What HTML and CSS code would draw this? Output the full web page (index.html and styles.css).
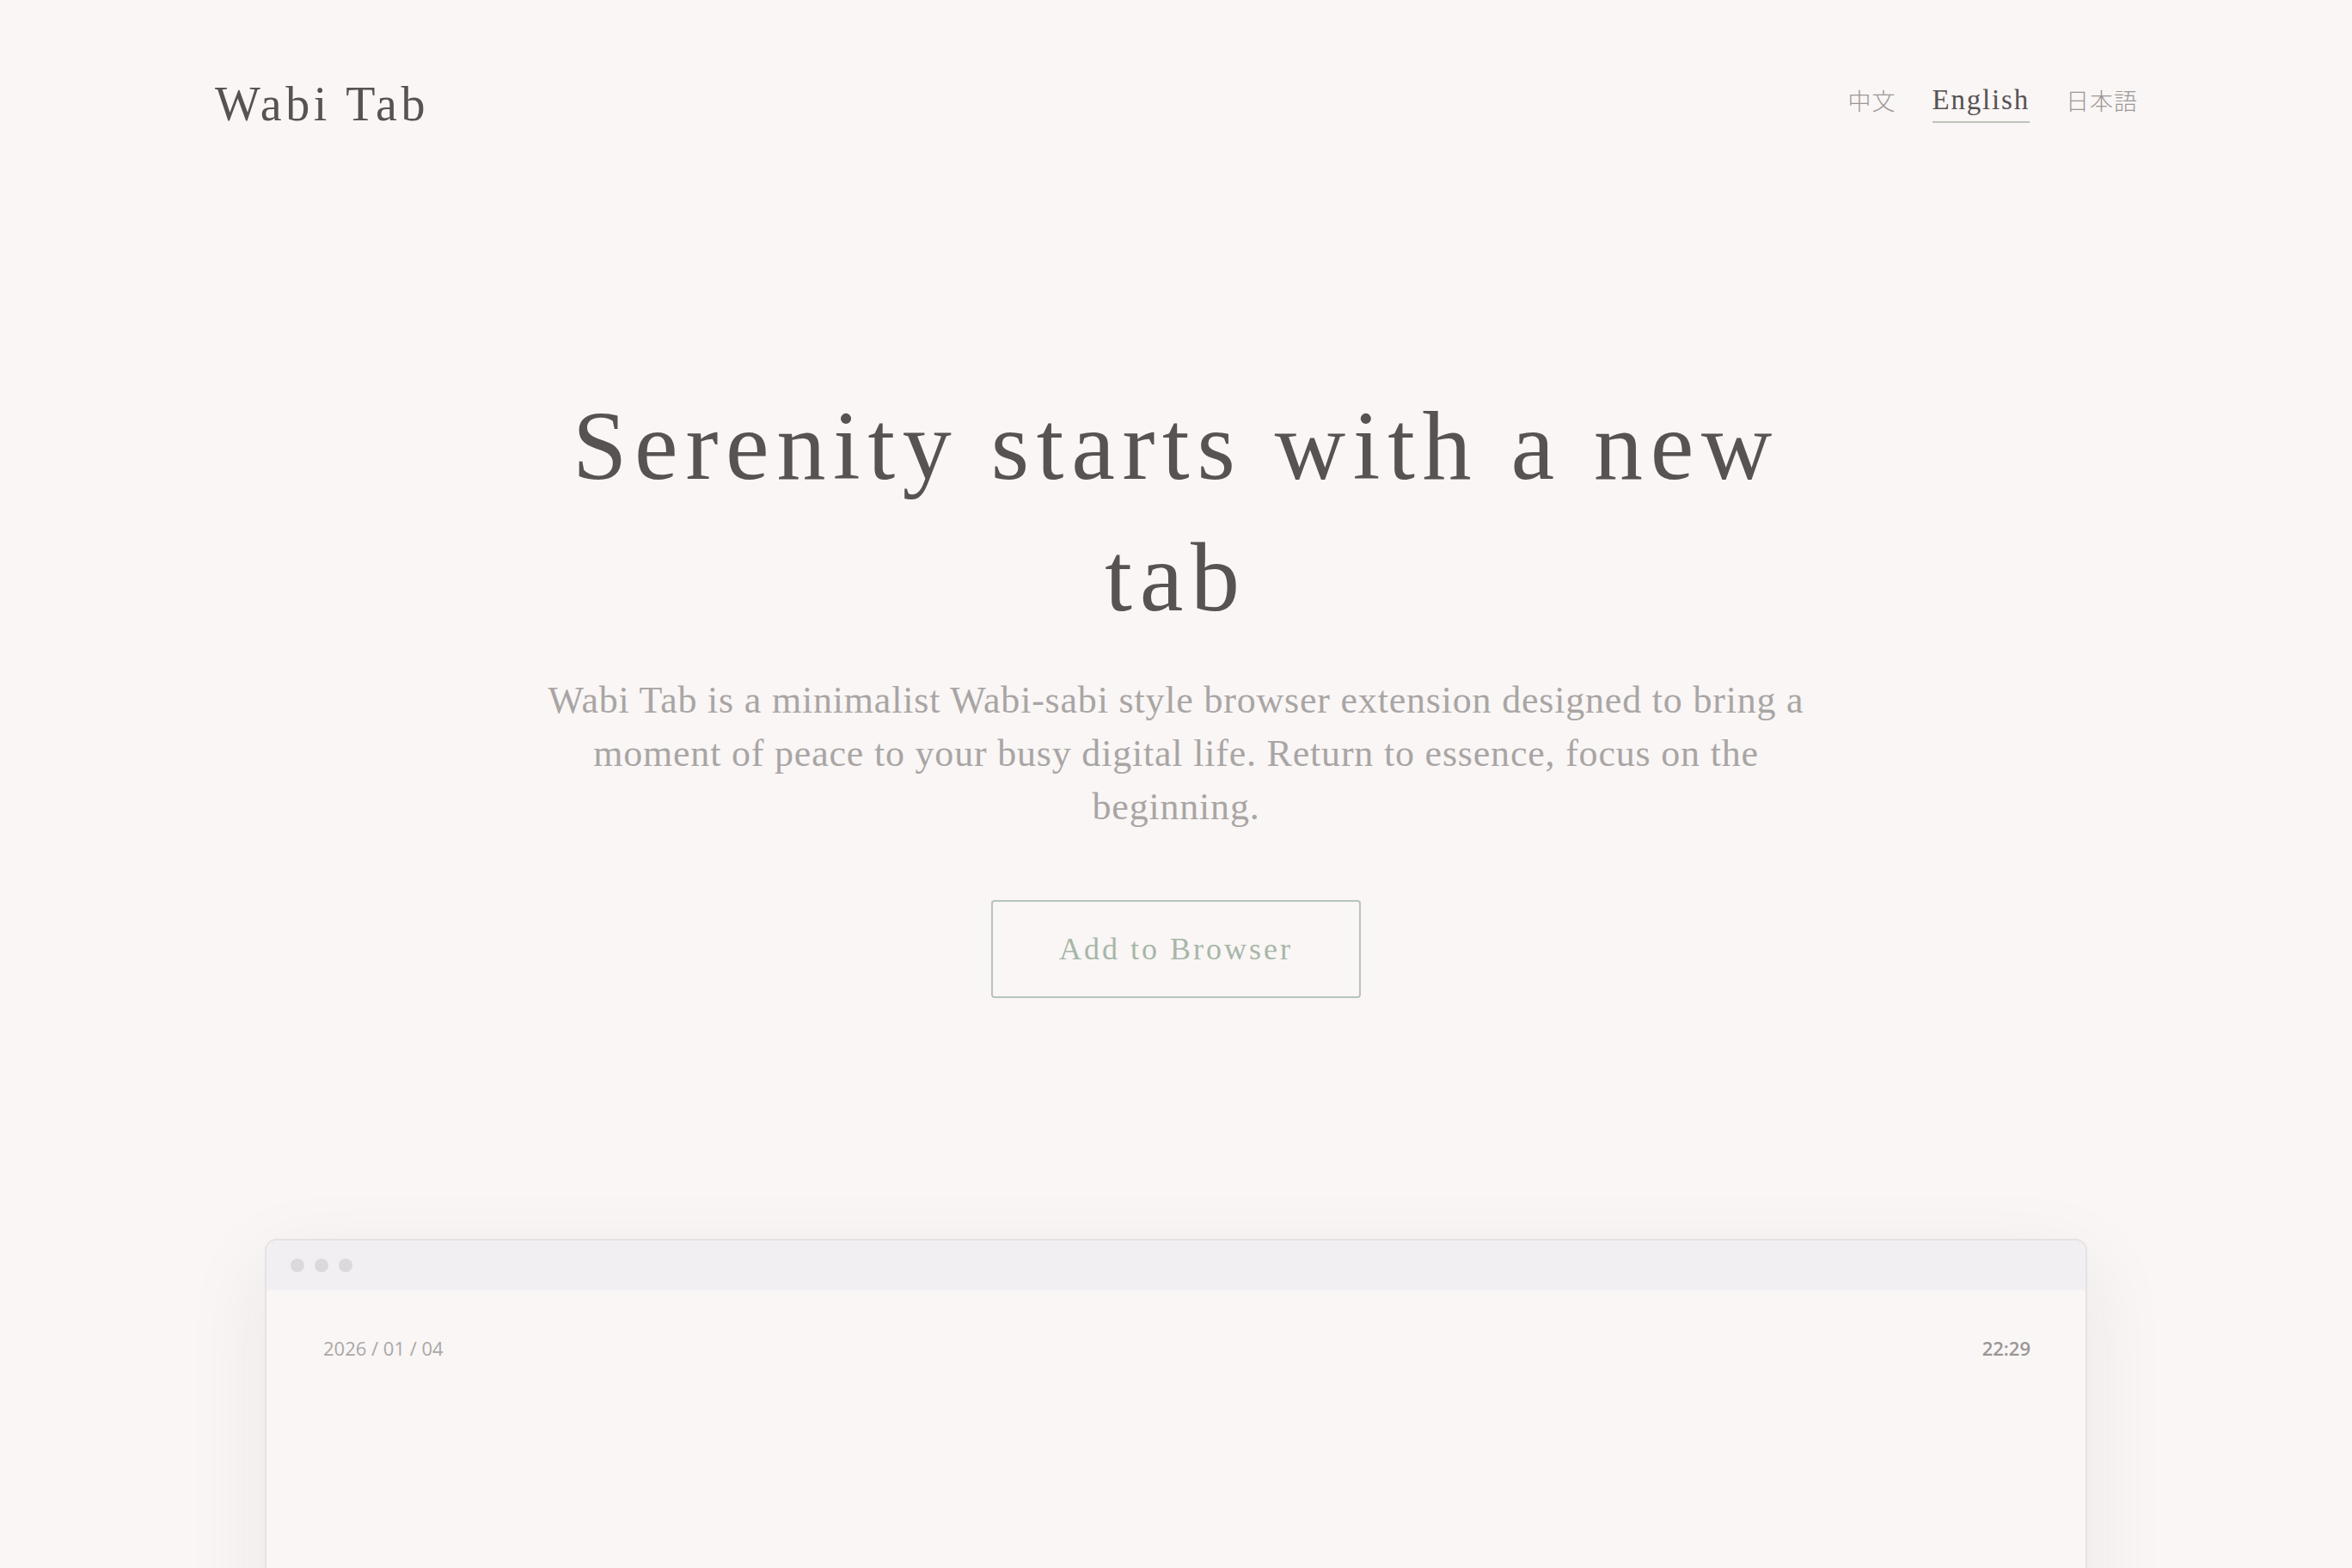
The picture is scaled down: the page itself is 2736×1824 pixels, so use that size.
FILE: index.html
```html
<!DOCTYPE html>
<html lang="en">
<head>
<meta charset="utf-8">
<title>Wabi Tab</title>
<link rel="stylesheet" href="styles.css">
</head>
<body>
<header class="site-header">
  <div class="logo">Wabi Tab</div>
  <nav class="lang-nav">
    <a class="lang cjk" href="#">中文</a>
    <a class="lang active" href="#">English</a>
    <a class="lang cjk" href="#">日本語</a>
  </nav>
</header>
<main class="hero">
  <h1 class="hero-title">Serenity starts with a new tab</h1>
  <p class="hero-text">Wabi Tab is a minimalist Wabi-sabi style browser extension designed to bring a moment of peace to your busy digital life. Return to essence, focus on the beginning.</p>
  <a class="cta" href="#">Add to Browser</a>
</main>
<section class="preview">
  <div class="window">
    <div class="window-bar">
      <span class="dot"></span><span class="dot"></span><span class="dot"></span>
    </div>
    <div class="window-body">
      <div class="window-top">
        <span class="date">2026 / 01 / 04</span>
        <span class="time">22:29</span>
      </div>
    </div>
  </div>
</section>
</body>
</html>
```

FILE: styles.css
```css
* { box-sizing: border-box; }
html, body { margin: 0; padding: 0; }
body {
  background: #f9f6f5;
  font-family: "Liberation Serif", "Noto Sans CJK JP", serif;
  color: #575353;
  overflow: hidden;
  height: 1824px;
}
a { text-decoration: none; color: inherit; }

.site-header {
  display: flex;
  justify-content: space-between;
  align-items: flex-start;
  padding: 93px 249px 0 250px;
}
.logo {
  font-size: 56px;
  line-height: 1;
  letter-spacing: 4.5px;
  color: #575353;
}
.lang-nav {
  display: flex;
  align-items: flex-start;
  gap: 42px;
  padding-top: 7px;
}
.lang {
  font-size: 33px;
  line-height: 1;
  letter-spacing: 1.8px;
  color: #9d9897;
  padding-bottom: 8px;
  border-bottom: 2px solid transparent;
}
.lang.cjk {
  font-family: "Noto Sans CJK JP", sans-serif;
  font-size: 27px;
  font-weight: 300;
  letter-spacing: 1px;
  padding-top: 3px;
}
.lang.active {
  color: #575353;
  border-bottom-color: #bcc5bb;
}

.hero {
  display: flex;
  flex-direction: column;
  align-items: center;
  text-align: center;
  padding-top: 293px;
}
.hero-title {
  margin: 0;
  max-width: 1500px;
  font-size: 114px;
  line-height: 153px;
  font-weight: 400;
  letter-spacing: 8.7px;
  color: #575353;
}
.hero-text {
  margin: 36px 0 0;
  max-width: 1500px;
  font-size: 44px;
  line-height: 62px;
  letter-spacing: 0.8px;
  color: #a9a5a4;
}
.cta {
  margin-top: 77px;
  width: 430px;
  height: 114px;
  display: flex;
  align-items: center;
  justify-content: center;
  border: 2px solid #b8c4b9;
  border-radius: 4px;
  font-size: 36px;
  letter-spacing: 3px;
  color: #a7b6a9;
}

.preview {
  display: flex;
  justify-content: center;
  padding-top: 280px;
}
.window {
  width: 2120px;
  height: 900px;
  border: 2px solid #e6e2e2;
  border-radius: 14px;
  overflow: hidden;
  background: #f9f6f5;
  box-shadow: 0 30px 100px rgba(60, 40, 40, 0.08);
}
.window-bar {
  height: 58px;
  background: #f1eff1;
  display: flex;
  align-items: center;
  gap: 12px;
  padding-left: 28px;
}
.dot {
  width: 16px;
  height: 16px;
  border-radius: 50%;
  background: #dcd9dc;
}
.window-body {
  padding: 52px 64px 0 66px;
}
.window-top {
  display: flex;
  justify-content: space-between;
  font-family: "Open Sans", "Noto Sans", sans-serif;
  font-size: 22px;
  line-height: 30px;
}
.date { color: #aba7a7; }
.time { color: #9a9696; font-weight: 600; }
```
